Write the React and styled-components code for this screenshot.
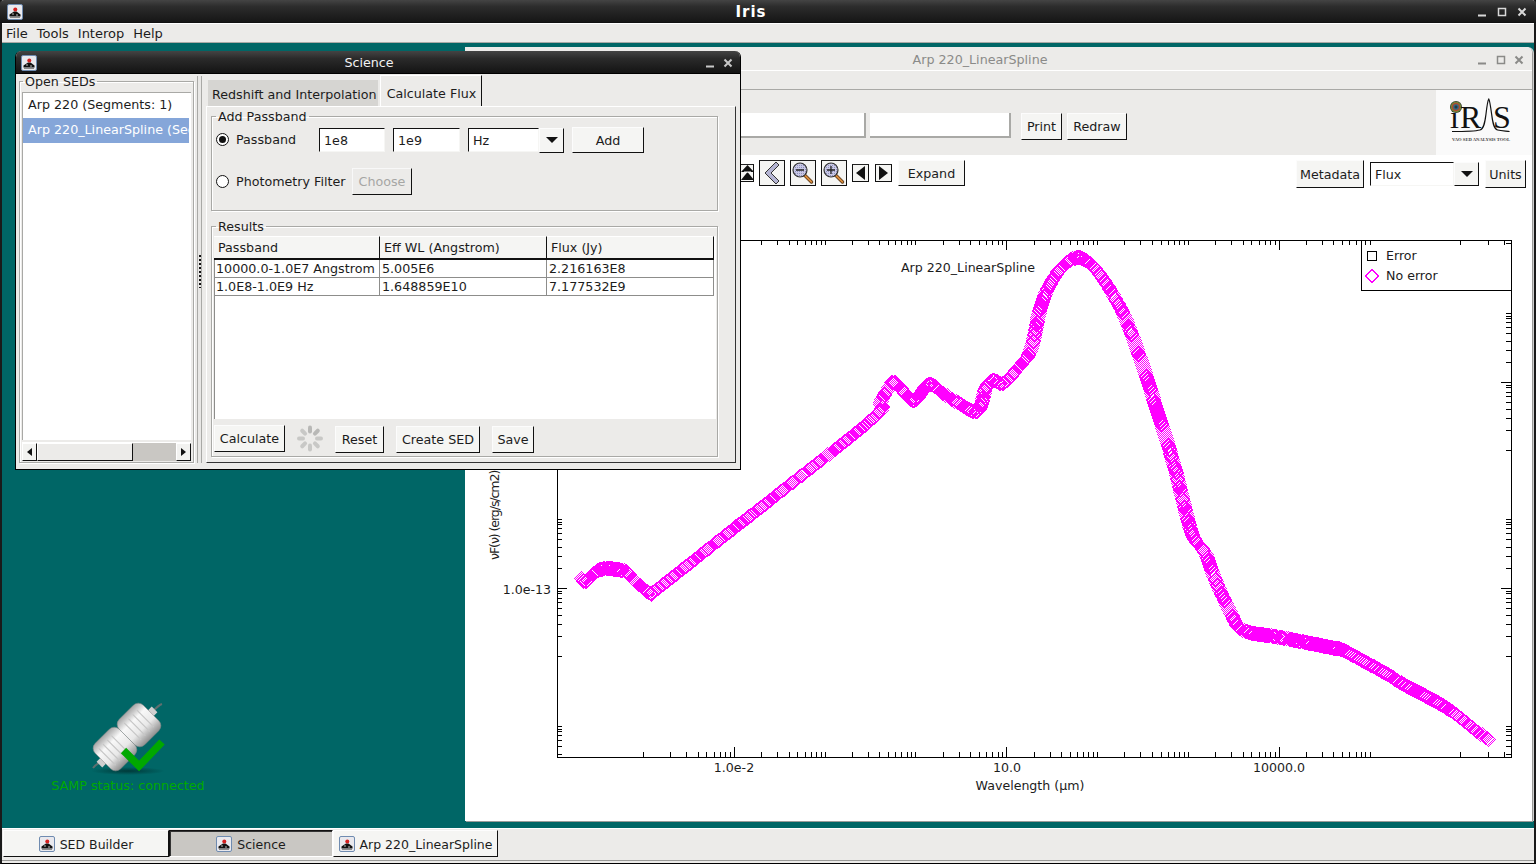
import React, { useMemo } from "react";
import styled, { createGlobalStyle } from "styled-components";

const Global = createGlobalStyle`
  html, body { margin: 0; padding: 0; width: 1536px; height: 864px; overflow: hidden; background: #ecebe9; }
  * { box-sizing: border-box; }
  body, button, input { font-family: "DejaVu Sans", "Liberation Sans", sans-serif; font-size: 12.7px; color: #1c1c1c; }
`;

const Screen = styled.div`
  width: 1536px; height: 864px; display: flex; flex-direction: column;
  background: #ecebe9; border-left: 2px solid #1a1a1a; border-right: 2px solid #1a1a1a; border-bottom: 1px solid #000;
`;
const MainTitle = styled.div`
  height: 23px; margin: 0 -2px; padding: 1px 9px 0 7px; display: grid; grid-template-columns: 1fr auto 1fr; align-items: center;
  background: linear-gradient(#444 0, #2c2c2c 30%, #161616 100%); color: #fff; border-radius: 4px 4px 0 0;
  border-bottom: 1px solid #111;
`;
const TitleText = styled.span`margin-right: ${p => p.$shift || 0}px; ${p => p.$big ? "font-weight: bold; font-size: 15px; letter-spacing: 1px;" : ""}`;
const MenuBar = styled.div`
  height: 20px; padding: 1px 0 0 4px; display: flex; gap: 9px; align-items: center; border-top: 1px solid #fff;
  border-bottom: 1px solid #a9a9a6; font-size: 13px;
`;
const MenuItem = styled.span`line-height: 17px;`;
const Desktop = styled.div`flex: 1; position: relative; background: #006666; overflow: hidden;`;
const TaskBar = styled.div`
  height: 35px; flex: none; padding: 1px 0 0 1px; display: flex; align-items: flex-start; border-top: 1px solid #fff; position: relative; font-size: 12.5px;
  &::after { content: ""; position: absolute; left: 0; right: 0; bottom: 2px; height: 1px; background: #9a9a98; }
`;
const TaskButton = styled.div`
  width: ${p => p.$w}px; height: 27px; padding-top: 1px; display: flex; align-items: center; justify-content: center; gap: 5px;
  background: ${p => (p.$on ? "#c9c7c3" : "#f5f5f3")};
  border: 1px solid ${p => (p.$on ? "#111" : "#fdfdfd")};
  border-right-color: ${p => (p.$on ? "#fff" : "#111")};
  border-bottom-color: ${p => (p.$on ? "#fff" : "#111")};
  ${p => (p.$on ? "box-shadow: inset 1px 1px 0 #333;" : "")}
`;
const Win = styled.section`
  position: absolute; left: ${p => p.$l}px; top: ${p => p.$t}px; width: ${p => p.$w}px; height: ${p => p.$h}px;
  display: flex; flex-direction: column; background: #ecebe9;
`;
const ScienceWin = styled(Win)`border: 1px solid #000; border-top: 0; border-radius: 6px 6px 0 0; overflow: hidden; z-index: 2;`;
const ArpWin = styled(Win)`background: #fff; border-radius: 0 6px 0 0; overflow: hidden; box-shadow: 1px 1px 0 #9a9a98, 2px 0 0 #cfcfcf;`;
const DarkTitle = styled.div`
  height: 23px; flex: none; padding: 1px 7px 0 5px; display: grid; grid-template-columns: 1fr auto 1fr; align-items: center;
  background: linear-gradient(#444 0, #2a2a2a 35%, #141414 100%); color: #f2f2f2; border-bottom: 1px solid #000;
`;
const PaleTitle = styled.div`
  height: 24px; flex: none; padding: 2px 8px 0 5px; display: grid; grid-template-columns: 1fr auto 1fr; align-items: center;
  background: #ecebe9; color: #8a8a88; border-bottom: 1px solid #fff;
`;
const Controls = styled.div`display: flex; justify-content: flex-end; gap: ${p => p.$gap}px; align-items: center;`;
const Body = styled.div`flex: 1; display: flex; padding: 0 4px 6px 3px; min-height: 0;`;
const Group = styled.fieldset`
  margin: 0; padding: 0; min-width: 0; border: 1px solid #a9a9a6; box-shadow: 1px 1px 0 #fff, inset 1px 1px 0 #fff;
  & > legend { padding: 0 2px; margin-left: ${p => p.$lm || 0}px; line-height: 15px; font-size: 12.7px; }
`;
const SedGroup = styled(Group)`width: 175px; flex: none; display: flex; flex-direction: column; padding: 3px 2px 1px 3px;`;
const SedList = styled.div`flex: 1; background: #fff; border-top: 1px solid #a9a9a6; border-left: 1px solid #a9a9a6; margin-left: -1px; overflow: hidden;`;
const SedItem = styled.div`
  height: 25px; line-height: 24px; padding-left: 5px; white-space: nowrap; overflow: hidden; width: 166px;
  background: ${p => (p.$sel ? "#85a6d9" : "#fff")}; color: ${p => (p.$sel ? "#fff" : "#1c1c1c")};
`;
const HScroll = styled.div`height: 19px; margin: 2px 0 0 -1px; display: flex; flex: none; background: #c9c7c3; border-top: 1px solid #fff;`;
const ScrollArrow = styled.div`
  width: 15px; display: flex; align-items: center; justify-content: center; background: #f2f2f0;
  border: 1px solid #fff; border-right-color: #111; border-bottom-color: #111;
`;
const ScrollThumb = styled.div`width: 96px; background: #ecebe9; border: 1px solid #fff; border-right-color: #111; border-bottom-color: #111;`;
const ScrollGap = styled.div`flex: 1;`;
const Splitter = styled.div`
  width: 5px; margin: 2px 0 0 3px; flex: none; border-left: 1px solid #a9a9a6; border-right: 1px solid #a9a9a6; display: flex; align-items: flex-start; justify-content: flex-end; background: #e8e7e5;
`;
const Grip = styled.div`width: 2px; height: 33px; margin-top: 179px; background: repeating-linear-gradient(#111 0 2px, transparent 2px 4px);`;
const TabArea = styled.div`flex: 1; display: flex; flex-direction: column; margin-left: 4px; min-width: 0;`;
const TabStrip = styled.div`height: 32px; flex: none; display: flex; align-items: flex-end; padding-left: 2px; gap: 2px;`;
const Tab = styled.div`
  white-space: nowrap;
  ${p => p.$on
    ? "height: 31px; padding: 5px 5px 0 6px; display:flex; align-items:center; background:#ecebe9; border-top:1px solid #fff; border-left:1px solid #fff; border-right:1px solid #111;"
    : "height: 26px; padding: 2px 1px 0 4px; display:flex; align-items:center; background:#d6d5d2;"}
`;
const TabPanel = styled.div`
  flex: 1; padding: 2px 17px 5px 4px; display: flex; flex-direction: column; gap: 8px;
  border-top: 1px solid #fff; border-left: 1px solid #fff; border-right: 1px solid #333; border-bottom: 1px solid #333;
  min-height: 0;
`;
const AddGroup = styled(Group)`height: 102px; flex: none; padding: 3px 0 0 4px; display: flex; flex-direction: column; gap: 15px;`;
const FormRow = styled.div`display: flex; align-items: center; gap: 8px;`;
const RadioOption = styled.label`width: ${p => p.$w}px; margin-top: ${p => p.$mt || 0}px; display: flex; align-items: center; gap: 7px; flex: none; white-space: nowrap;`;
const Radio = styled.span`
  width: 13px; height: 13px; border-radius: 50%; border: 1px solid #111; background: #fff; flex: none; display: flex; align-items: center; justify-content: center;
  &::after { content: ""; width: 7px; height: 7px; border-radius: 50%; background: ${p => (p.$on ? "#111" : "transparent")}; }
`;
const Field = styled.div`
  width: ${p => p.$w}px; height: 24px; margin-top: ${p => p.$mt || 0}px; flex: none; padding: 0 4px; line-height: 23px; background: #fff; white-space: nowrap; overflow: hidden;
  border: 1px solid #f6f6f4; border-top-color: #111; border-left-color: #111;
`;
const Button = styled.div`
  width: ${p => p.$w}px; height: ${p => p.$h || 27}px; flex: none; display: flex; align-items: center; justify-content: center; white-space: nowrap;
  margin-top: ${p => p.$mt || 0}px; margin-left: ${p => p.$ml || 0}px;
  background: ${p => (p.$off ? "#ecebe9" : "#f5f5f3")}; color: ${p => (p.$off ? "#a6a6a4" : "#1c1c1c")};
  border: 1px solid ${p => (p.$off ? "#f8f8f8" : "#fcfcfc")}; border-right-color: #111; border-bottom-color: #111;
`;
const Combo = styled.div`display: flex; flex: none; align-items: flex-start;`;
const ResultsGroup = styled(Group)`flex: 1; min-height: 0; padding: 2px 1px 0 2px; display: flex; flex-direction: column;`;
const TableBox = styled.div`flex: 1; background: #fff; border-left: 1px solid #8d8d8b; display: flex; flex-direction: column; min-height: 0;`;
const THead = styled.div`display: grid; grid-template-columns: 166px 167px 167px; height: 24px; margin-left: -1px; background: #f5f5f3; width: 500px; border-bottom: 2px solid #111; flex: none;`;
const TH = styled.div`padding: 0 4px; line-height: 21px; border-right: 1px solid #111; border-top: 1px solid #fff; white-space: nowrap;`;
const TRow = styled.div`display: grid; grid-template-columns: 165px 167px 167px; height: 18px; width: 499px; border-bottom: 1px solid #8d8d8b; flex: none;`;
const TD = styled.div`padding: 0 2px; line-height: 17px; border-right: 1px solid #8d8d8b; white-space: nowrap; overflow: hidden; &:first-child { padding-left: 1px; }`;
const Footer = styled.div`height: 37px; flex: none; padding-top: 6px; display: flex; gap: 12px; align-items: flex-start;`;
const Strip = styled.div`height: 19px; flex: none; background: #ecebe9; border-bottom: 1px solid #a9a9a6;`;
const Toolbar = styled.div`height: 65px; flex: none; background: #ecebe9; display: flex; align-items: flex-start; padding-top: 23px;`;
const TopField = styled.div`width: ${p => p.$w}px; margin-left: ${p => p.$ml || 0}px; height: 25px; background: #fff; border-right: 2px solid #a9a9a6; border-bottom: 2px solid #a9a9a6; flex: none;`;
const LogoBox = styled.div`margin-left: auto; margin-top: -23px; width: 96px; height: 65px; background: #fafafa; flex: none;`;
const ControlRow = styled.div`height: 35px; flex: none; padding: 5px 6px 0 275px; display: flex; align-items: flex-start; gap: 5px;`;
const IconBtn = styled.div`
  width: ${p => p.$s}px; height: ${p => p.$hh || p.$s}px; margin-top: ${p => p.$mt || 0}px; margin-left: ${p => p.$ml || 0}px; flex: none; display: flex; align-items: center; justify-content: center;
  background: #f5f5f3; border: 1px solid #111; border-top-color: #222;
`;
const RightTools = styled.div`margin-left: auto; display: flex; gap: 6px; align-items: flex-start;`;
const PlotSvg = styled.svg`display: block; flex: none; font-family: "DejaVu Sans", sans-serif; font-size: 12.6px; fill: #1c1c1c;`;
const SampBox = styled.div`position: absolute; left: 46px; top: 658px; width: 160px; display: flex; flex-direction: column; align-items: center;`;
const SampText = styled.div`color: #00aa00; white-space: nowrap; line-height: 16px; margin-top: 3px;`;
const Glyph = styled.svg`flex: none; display: block;`;
const Tri = styled.span`
  width: 0; height: 0;
  ${p => p.$dir === "down" && "border-left: 6px solid transparent; border-right: 6px solid transparent; border-top: 6px solid #111;"}
  ${p => p.$dir === "left" && "border-top: 4px solid transparent; border-bottom: 4px solid transparent; border-right: 5px solid #111;"}
  ${p => p.$dir === "right" && "border-top: 4px solid transparent; border-bottom: 4px solid transparent; border-left: 5px solid #111;"}
`;

const JavaIcon = () => (
  <Glyph width="16" height="16" viewBox="0 0 16 16">
    <rect x=".5" y=".5" width="15" height="15" rx="1.500" fill="#e9e9ee" stroke="#6f8bb0" />
    <path d="M2.500 10.500 7 7.500l2.500 0 4 3v2h-11z" fill="#111" />
    <circle cx="8.300" cy="5.500" r="2" fill="#d42020" />
    <path d="M3 13.500h10" stroke="#8a8a8a" />
    <path d="M5 10h2M9 11h2" stroke="#bbb" />
  </Glyph>
);
const WinGlyphs = ({ color, max, w = 2 }) => (
  <>
    <Glyph width="10" height="10" viewBox="0 0 10 10"><path d="M1 8.500h8" stroke={color} strokeWidth={w} /></Glyph>
    {max && <Glyph width="10" height="10" viewBox="0 0 10 10"><rect x="1.500" y="1.500" width="7" height="7" fill="none" stroke={color} strokeWidth="1.500" /></Glyph>}
    <Glyph width="10" height="10" viewBox="0 0 10 10"><path d="M1.500 1.500l7 7M8.500 1.500l-7 7" stroke={color} strokeWidth={w} /></Glyph>
  </>
);
const Spinner = () => (
  <Glyph width="26" height="27" viewBox="-13 -13 26 26">
    {[0, 45, 90, 135, 180, 225, 270, 315].map(a => (
      <line key={a} x1="0" y1="-7" x2="0" y2="-11" transform={`rotate(${a})`} stroke={a === 0 || a === 45 ? "#b8b8b6" : "#c8c8c6"} strokeWidth="4" strokeLinecap="round" />
    ))}
  </Glyph>
);
const Magnifier = ({ plus }) => (
  <Glyph width="24" height="24" viewBox="0 0 24 24">
    <defs><pattern id={plus ? "hp" : "hm"} width="2" height="2" patternUnits="userSpaceOnUse"><rect width="2" height="2" fill="#c9c9e6" /><rect width="1" height="1" fill="#8f8fbd" /></pattern></defs>
    <path d="M13.500 14l7 7" stroke="#5a3a1a" strokeWidth="3.400" strokeLinecap="round" />
    <path d="M14 14.500l6.400 6.400" stroke="#d98a3a" strokeWidth="1.800" strokeLinecap="round" />
    <circle cx="9" cy="9" r="7" fill={`url(#${plus ? "hp" : "hm"})`} stroke="#333" strokeWidth="1.200" />
    <path d="M5 9h8" stroke="#222" strokeWidth="1.300" />
    {plus && <path d="M9 5v8" stroke="#222" strokeWidth="1.300" />}
  </Glyph>
);
const Chevron = () => (
  <Glyph width="24" height="24" viewBox="0 0 24 24">
    <path d="M16 1 5 12l11 11 3-3-8-8 8-8z" fill="#b4b4d2" stroke="#333" strokeWidth="1" />
  </Glyph>
);
const UpIcon = () => (
  <Glyph width="13" height="16" viewBox="0 0 13 16">
    <path d="M6.500 0 13 7H0zM6.500 7 13 15H0z" fill="#111" />
    <path d="M3 7h7" stroke="#fff" />
  </Glyph>
);
const NavTri = ({ dir }) => (
  <Glyph width="11" height="14" viewBox="0 0 11 14">
    <path d={dir === "left" ? "M10 0v14L1 7z" : "M1 0v14l9-7z"} fill="#111" />
  </Glyph>
);
const Logo = () => (
  <Glyph width="96" height="65" viewBox="1436 90 96 65">
    <defs>
      <radialGradient id="eye"><stop offset="0" stopColor="#222" /><stop offset=".35" stopColor="#2d6a8a" /><stop offset=".6" stopColor="#b44a2a" /><stop offset=".8" stopColor="#6b8a3a" /><stop offset="1" stopColor="#222" /></radialGradient>
    </defs>
    <circle cx="1456" cy="107" r="6" fill="url(#eye)" />
    <g fontFamily="Liberation Serif, serif" fill="#111">
      <text x="1450" y="128" fontSize="32">ı</text>
      <text x="1460" y="128" fontSize="32">R</text>
      <text x="1493" y="128" fontSize="32">S</text>
      <text x="1452" y="141" fontSize="4.600" fontWeight="bold" fill="#444" textLength="58">VAO SED ANALYSIS TOOL</text>
    </g>
    <path d="M1452 131.500c12 0 22 0 28-1.500 4-1 5-8 6-16 .8-7 2-14 2.800-15 .8 1 2 9 2.800 15 1 8 2 15 6 16 4 1 9 1 12 1.500" fill="none" stroke="#111" strokeWidth="1.200" />
  </Glyph>
);
const SampIcon = () => (
  <Glyph width="80" height="74" viewBox="88 701 80 74">
    <defs>
      <linearGradient id="cap" x1="0" y1="0" x2="0" y2="1"><stop offset="0" stopColor="#a5a5a5" /><stop offset=".3" stopColor="#f8f8f8" /><stop offset=".65" stopColor="#e8e8e8" /><stop offset="1" stopColor="#909090" /></linearGradient>
      <radialGradient id="shd"><stop offset="0" stopColor="#003a3a" /><stop offset="1" stopColor="#006666" /></radialGradient>
    </defs>
    <ellipse cx="128" cy="771" rx="37" ry="4" fill="url(#shd)" />
    <path d="M93 768c3-4 6-5 9-7M153 711c3-3 6-6 9-7" stroke="#5f6f6f" strokeWidth="2" fill="none" />
    <g transform="translate(127 737) rotate(-45)">
      <rect x="-39" y="-4" width="8" height="8" fill="#cfcfcf" />
      <rect x="31" y="-4" width="8" height="8" fill="#cfcfcf" />
      <rect x="-34" y="-18" width="34" height="36" rx="7" fill="url(#cap)" stroke="#888" strokeWidth=".5" />
      <rect x="0" y="-18" width="34" height="36" rx="7" fill="url(#cap)" stroke="#888" strokeWidth=".5" />
      <path d="M-28-12v24M-22-12v24M-16-12v24M-10-12v24M8-12v24M14-12v24M20-12v24M26-12v24" stroke="#c6c6c6" strokeWidth="1.200" />
    </g>
    <path d="M123.500 750.500 139 766l23-24" fill="none" stroke="#00a800" strokeWidth="7.500" />
  </Glyph>
);

const WAY = [
  [581, 578, 1.4], [585, 581, 1.2], [592, 574, 1], [600, 569, 1], [612, 568.5, 1], [625, 571, 1], [632, 578, 1.2], [641, 586, 1.3], [651, 593, 1.3],
  [660, 586, 1.17], [750, 515, 1.17], [870, 420, 1.17], [880, 402, 1.4], [888, 388, 1.4], [895, 382, 1.3], [913, 400, 1.2], [928, 384, 1], [943, 393, 1.2], [957, 402, 1.2], [977, 411, 1.1],
  [985, 388, 1.4], [993, 380, 1.4], [1003, 383, 1.3], [1017, 368, 1.4], [1030, 350, 1.4], [1040, 307, 1.5], [1050, 283, 1.4], [1063, 265, 1.2], [1077, 257, 1], [1088, 262, 1], [1100, 275, 1.1],
  [1113, 295, 1.4], [1125, 318, 1.4], [1137, 350, 1.5], [1147, 380, 1.5], [1163, 430, 1.5], [1175, 470, 1.5], [1185, 510, 1.5], [1193, 537, 1.4], [1205, 553, 1.3], [1213, 575, 1.4],
  [1230, 612, 1.4], [1243, 630, 1.2], [1280, 637, 1], [1330, 647, 1], [1343, 650, 1], [1380, 670, 1.1], [1407, 686, 1], [1447, 708, 1], [1470, 726, 1.5], [1488, 739, 1.5],
];
function buildCurve() {
  const pts = WAY;
  let out = ""; let acc = 0;
  const place = (x, y) => { const X = Math.round(x) + .5, Y = Math.round(y) + .5; out += `M${X} ${Y - 7}L${X + 7} ${Y}L${X} ${Y + 7}L${X - 7} ${Y}Z`; };
  let last = pts[0]; place(last[0], last[1]);
  for (let i = 0; i < pts.length - 1; i++) {
    const p0 = pts[Math.max(0, i - 1)], p1 = pts[i], p2 = pts[i + 1], p3 = pts[Math.min(pts.length - 1, i + 2)];
    const n = Math.ceil(Math.hypot(p2[0] - p1[0], p2[1] - p1[1]) * 4);
    for (let s = 1; s <= n; s++) {
      const t = s / n, t2 = t * t, t3 = t2 * t;
      const x = .5 * (2 * p1[0] + (p2[0] - p0[0]) * t + (2 * p0[0] - 5 * p1[0] + 4 * p2[0] - p3[0]) * t2 + (3 * p1[0] - p0[0] - 3 * p2[0] + p3[0]) * t3);
      const y = .5 * (2 * p1[1] + (p2[1] - p0[1]) * t + (2 * p0[1] - 5 * p1[1] + 4 * p2[1] - p3[1]) * t2 + (3 * p1[1] - p0[1] - 3 * p2[1] + p3[1]) * t3);
      acc += Math.hypot(x - last[0], y - last[1]); last = [x, y];
      if (acc >= p2[2]) { place(x, y); acc = 0; }
    }
  }
  return out;
}
function buildTicks() {
  const L = 557, R = 1511, T = 240, B = 757; let d = "";
  const mult = [2, 3, 4, 5, 6, 7, 8, 9].map(Math.log10);
  const D = 90.83;
  for (let k = 0; k <= 9; k++) {
    const x0 = 643 + D * k;
    const major = k === 1 || k === 4 || k === 7;
    const X = Math.round(x0) + .5, len = major ? 10 : 5;
    d += `M${X} ${B}v-${len}M${X} ${T}v${len}`;
    const ms = k < 8 ? mult : k === 9 ? mult.slice(0, 2) : [];
    ms.forEach(m => { const x = Math.round(x0 + m * D) + .5; if (x < R) d += `M${x} ${B}v-5M${x} ${T}v5`; });
  }
  const cl = [0, 2.5, 5, 9, 14, 20, 28, 37, 49];
  const cl2 = [3, 5, 9.7, 14, 20, 27, 36, 48, 68];
  [106, 313, 519, 726].forEach(c => {
    const ys = [...cl.map(o => c + o), ...cl2.map(o => c + 69 + o)];
    ys.forEach(y => { if (y > T + 1 && y < B - 1) { const Y = Math.round(y) + .5; d += `M${L} ${Y}h5M${R} ${Y}h-5`; } });
    const m = Math.round(c + 69) + .5;
    if (m > T && m < B) d += `M${L} ${m}h10M${R} ${m}h-10`;
  });
  return d;
}

const Plot = () => {
  const curve = useMemo(buildCurve, []);
  const ticks = useMemo(buildTicks, []);
  return (
    <PlotSvg width="1067" height="630" viewBox="465 190 1067 630">
      <rect x="1361.5" y="240.5" width="150" height="50" fill="#fff" stroke="#000" />
      <rect x="557.500" y="240.500" width="954" height="517" fill="none" stroke="#000" />
      <path d={ticks} stroke="#000" fill="none" shapeRendering="crispEdges" />
      <rect x="1367.5" y="251.5" width="9" height="9" fill="none" stroke="#000" />
      <path d="M1372 269.500 1378.500 276 1372 282.500 1365.500 276z" fill="none" stroke="#ff00ff" shapeRendering="crispEdges" />
      <text x="1386" y="260">Error</text>
      <text x="1386" y="280">No error</text>
      <text x="901" y="272">Arp 220_LinearSpline</text>
      <path d={curve} fill="none" stroke="#ff00ff" strokeWidth="1" shapeRendering="crispEdges" />
      <text x="734" y="772" textAnchor="middle">1.0e-2</text>
      <text x="1007" y="772" textAnchor="middle">10.0</text>
      <text x="1279" y="772" textAnchor="middle">10000.0</text>
      <text x="1030" y="790" textAnchor="middle">Wavelength (µm)</text>
      <text x="551" y="594" textAnchor="end">1.0e-13</text>
      <text transform="translate(499 560) rotate(-90)" letterSpacing="-1.1">νF(ν) (erg/s/cm2)</text>
    </PlotSvg>
  );
};

export default function App() {
  return (
    <Screen>
      <Global />
      <MainTitle>
        <JavaIcon />
        <TitleText $big $shift={32}>Iris</TitleText>
        <Controls $gap={10}><WinGlyphs color="#d8d8d8" max /></Controls>
      </MainTitle>
      <MenuBar>
        <MenuItem>File</MenuItem><MenuItem>Tools</MenuItem><MenuItem>Interop</MenuItem><MenuItem>Help</MenuItem>
      </MenuBar>
      <Desktop>
        <ArpWin $l={463} $t={4} $w={1067} $h={774}>
          <PaleTitle><span /><TitleText $shift={34}>Arp 220_LinearSpline</TitleText><Controls $gap={8.5}><WinGlyphs color="#8a8a88" max /></Controls></PaleTitle>
          <Strip />
          <Toolbar>
            <TopField $w={401} />
            <TopField $w={141} $ml={4} />
            <Button $w={41} $ml={10}>Print</Button>
            <Button $w={60} $ml={5}>Redraw</Button>
            <LogoBox><Logo /></LogoBox>
          </Toolbar>
          <ControlRow>
            <IconBtn $s={14} $hh={18} $mt={4}><UpIcon /></IconBtn>
            <IconBtn $s={26}><Chevron /></IconBtn>
            <IconBtn $s={26}><Magnifier /></IconBtn>
            <IconBtn $s={26}><Magnifier plus /></IconBtn>
            <IconBtn $s={17} $hh={18} $mt={4}><NavTri dir="left" /></IconBtn>
            <IconBtn $s={17} $hh={18} $mt={4} $ml={1}><NavTri dir="right" /></IconBtn>
            <Button $w={67} $h={26} $ml={1}>Expand</Button>
            <RightTools>
              <Button $w={68} $h={28}>Metadata</Button>
              <Combo>
                <Field $w={84} $mt={2}>Flux</Field>
                <Button $w={25} $h={24} $mt={2}><Tri $dir="down" /></Button>
              </Combo>
              <Button $w={41} $h={28}>Units</Button>
            </RightTools>
          </ControlRow>
          <Plot />
        </ArpWin>

        <ScienceWin $l={13} $t={8} $w={726} $h={419}>
          <DarkTitle><JavaIcon /><TitleText $shift={16}>Science</TitleText><Controls $gap={8}><WinGlyphs color="#c8c8c8" /></Controls></DarkTitle>
          <Body>
            <SedGroup>
              <legend>Open SEDs</legend>
              <SedList>
                <SedItem>Arp 220 (Segments: 1)</SedItem>
                <SedItem $sel>Arp 220_LinearSpline (Segments: 1)</SedItem>
              </SedList>
              <HScroll>
                <ScrollArrow><Tri $dir="left" /></ScrollArrow>
                <ScrollThumb />
                <ScrollGap />
                <ScrollArrow><Tri $dir="right" /></ScrollArrow>
              </HScroll>
            </SedGroup>
            <Splitter><Grip /></Splitter>
            <TabArea>
              <TabStrip>
                <Tab>Redshift and Interpolation</Tab>
                <Tab $on>Calculate Flux</Tab>
              </TabStrip>
              <TabPanel>
                <AddGroup>
                  <legend>Add Passband</legend>
                  <FormRow>
                    <RadioOption $w={95} $mt={-2}><Radio $on />Passband</RadioOption>
                    <Field $w={66}>1e8</Field>
                    <Field $w={67}>1e9</Field>
                    <Combo>
                      <Field $w={71}>Hz</Field>
                      <Button $w={25} $h={25}><Tri $dir="down" /></Button>
                    </Combo>
                    <Button $w={72} $h={26}>Add</Button>
                  </FormRow>
                  <FormRow>
                    <RadioOption $w={128}><Radio />Photometry Filter</RadioOption>
                    <Button $w={60} $off>Choose</Button>
                  </FormRow>
                </AddGroup>
                <ResultsGroup $lm={2}>
                  <legend>Results</legend>
                  <TableBox>
                    <THead><TH>Passband</TH><TH>Eff WL (Angstrom)</TH><TH>Flux (Jy)</TH></THead>
                    <TRow><TD>10000.0-1.0E7 Angstrom</TD><TD>5.005E6</TD><TD>2.216163E8</TD></TRow>
                    <TRow><TD>1.0E8-1.0E9 Hz</TD><TD>1.648859E10</TD><TD>7.177532E9</TD></TRow>
                  </TableBox>
                  <Footer>
                    <Button $w={71}>Calculate</Button>
                    <Spinner />
                    <Button $w={49} $mt={1}>Reset</Button>
                    <Button $w={84} $mt={1}>Create SED</Button>
                    <Button $w={42} $mt={1}>Save</Button>
                  </Footer>
                </ResultsGroup>
              </TabPanel>
            </TabArea>
          </Body>
        </ScienceWin>

        <SampBox>
          <SampIcon />
          <SampText>SAMP status: connected</SampText>
        </SampBox>
      </Desktop>
      <TaskBar>
        <TaskButton $w={166}><JavaIcon />SED Builder</TaskButton>
        <TaskButton $w={164} $on><JavaIcon />Science</TaskButton>
        <TaskButton $w={165}><JavaIcon />Arp 220_LinearSpline</TaskButton>
      </TaskBar>
    </Screen>
  );
}
